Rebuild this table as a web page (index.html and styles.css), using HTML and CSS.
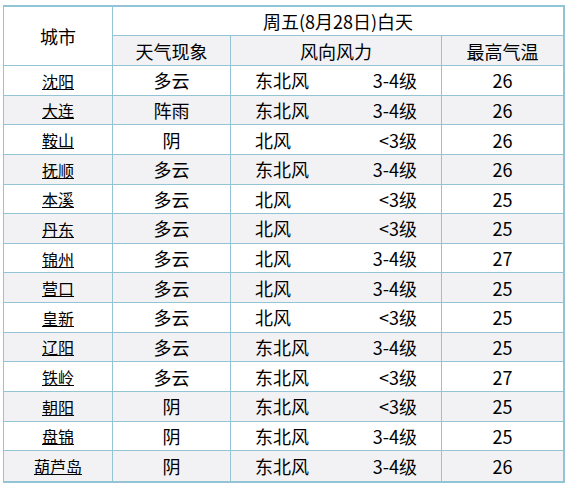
FILE: index.html
```html
<!DOCTYPE html>
<html lang="zh-CN">
<head>
<meta charset="utf-8">
<title>天气预报</title>
<link rel="stylesheet" href="styles.css">
</head>
<body>
<table class="weather">
  <colgroup>
    <col class="c-city">
    <col class="c-sky">
    <col class="c-wind">
    <col class="c-temp">
  </colgroup>
  <thead>
    <tr class="h1">
      <th rowspan="2" class="city-head">城市</th>
      <th colspan="3" class="date last">周五(8月28日)白天</th>
    </tr>
    <tr class="h2">
      <th>天气现象</th>
      <th>风向风力</th>
      <th class="last">最高气温</th>
    </tr>
  </thead>
  <tbody>
    <tr><td><a href="#">沈阳</a></td><td>多云</td><td><div class="wind"><span>东北风</span><span>3-4级</span></div></td><td class="last">26</td></tr>
    <tr><td><a href="#">大连</a></td><td>阵雨</td><td><div class="wind"><span>东北风</span><span>3-4级</span></div></td><td class="last">26</td></tr>
    <tr><td><a href="#">鞍山</a></td><td>阴</td><td><div class="wind"><span>北风</span><span>&lt;3级</span></div></td><td class="last">26</td></tr>
    <tr><td><a href="#">抚顺</a></td><td>多云</td><td><div class="wind"><span>东北风</span><span>3-4级</span></div></td><td class="last">26</td></tr>
    <tr><td><a href="#">本溪</a></td><td>多云</td><td><div class="wind"><span>北风</span><span>&lt;3级</span></div></td><td class="last">25</td></tr>
    <tr><td><a href="#">丹东</a></td><td>多云</td><td><div class="wind"><span>北风</span><span>&lt;3级</span></div></td><td class="last">25</td></tr>
    <tr><td><a href="#">锦州</a></td><td>多云</td><td><div class="wind"><span>北风</span><span>3-4级</span></div></td><td class="last">27</td></tr>
    <tr><td><a href="#">营口</a></td><td>多云</td><td><div class="wind"><span>北风</span><span>3-4级</span></div></td><td class="last">25</td></tr>
    <tr><td><a href="#">皇新</a></td><td>多云</td><td><div class="wind"><span>北风</span><span>&lt;3级</span></div></td><td class="last">25</td></tr>
    <tr><td><a href="#">辽阳</a></td><td>多云</td><td><div class="wind"><span>东北风</span><span>3-4级</span></div></td><td class="last">25</td></tr>
    <tr><td><a href="#">铁岭</a></td><td>多云</td><td><div class="wind"><span>东北风</span><span>&lt;3级</span></div></td><td class="last">27</td></tr>
    <tr><td><a href="#">朝阳</a></td><td>阴</td><td><div class="wind"><span>东北风</span><span>&lt;3级</span></div></td><td class="last">25</td></tr>
    <tr><td><a href="#">盘锦</a></td><td>阴</td><td><div class="wind"><span>东北风</span><span>3-4级</span></div></td><td class="last">25</td></tr>
    <tr class="end"><td><a href="#">葫芦岛</a></td><td>阴</td><td><div class="wind"><span>东北风</span><span>3-4级</span></div></td><td class="last">26</td></tr>
  </tbody>
</table>
</body>
</html>
```
FILE: styles.css
```css
html, body {
  margin: 0;
  padding: 0;
  background: #fff;
}

body {
  padding: 5px 0 0 3px;
  font-family: "Noto Sans CJK SC", "Noto Sans", sans-serif;
  color: #000;
}

.weather {
  border-collapse: separate;
  border-spacing: 0;
  table-layout: fixed;
  width: 561px;
  border-style: solid;
  border-color: #92c4d6;
  border-width: 2px 2px 2px 1px;
  font-size: 18px;
}

.c-city { width: 109px; }
.c-sky { width: 118px; }
.c-wind { width: 211px; }
.c-temp { width: 121px; }

.weather th,
.weather td {
  padding: 0;
  box-sizing: border-box;
  text-align: center;
  vertical-align: middle;
  font-weight: normal;
  line-height: 20px;
  border-right: 1px solid #92c4d6;
  border-bottom: 1px solid #92c4d6;
}

.weather .last {
  border-right: none;
}

.weather tr.end td {
  border-bottom: none;
}

.h1 { height: 29px; }
.h2 { height: 30px; }
.h2 th { background: #f2f2f4; }

.weather tbody tr { height: 29.64px; }
.weather tbody tr:nth-child(even) td { background: #f2f2f4; }

.weather a {
  color: #000;
  font-size: 16px;
  text-decoration: underline;
}

.wind {
  display: flex;
  justify-content: space-between;
  padding: 0 24px 0 24px;
}
```
